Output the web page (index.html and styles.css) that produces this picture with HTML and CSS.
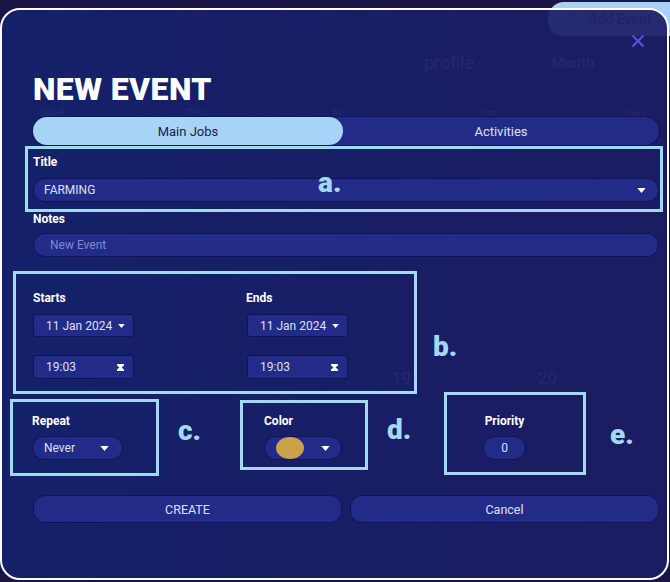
FILE: index.html
```html
<!DOCTYPE html>
<html lang="en">
<head>
    <meta charset="UTF-8">
    <meta name="viewport" content="width=device-width, initial-scale=1.0">
    <title>New Event</title>
    <link rel="stylesheet" href="styles.css">
</head>
<body>
    <div class="screen">
        <!-- calendar behind the dialog -->
        <div class="backdrop">
            <div class="bd-top"><span class="bd-add">Add Event</span></div>
            <div class="bd-nav">
                <span class="bd-profile">profile</span>
                <span class="bd-month">Month</span>
            </div>
            <div class="bd-week">
                <span>Wed</span><span>Thu</span><span>Fri</span><span>Sat</span><span>Sun</span>
            </div>
            <div class="bd-days">
                <span></span><span></span><span>19</span><span>20</span>
            </div>
        </div>

        <div class="modal">
            <button class="close" aria-label="Close">
                <svg viewBox="0 0 14 14" width="14" height="14"><path d="M1.5 1.5l11 11M12.5 1.5l-11 11"/></svg>
            </button>

            <h1>NEW EVENT</h1>

            <div class="tabs">
                <button class="tab active">Main Jobs</button>
                <button class="tab">Activities</button>
            </div>

            <div class="mark mark-a">
                <label class="label">Title</label>
                <div class="select wide">
                    <span>FARMING</span>
                    <svg class="caret" viewBox="0 0 10 6"><path d="M0 0h10L5 6z"/></svg>
                </div>
            </div>

            <label class="label notes-label" for="notes">Notes</label>
            <input class="text-input" id="notes" placeholder="New Event">

            <div class="mark mark-b">
                <div class="range-col">
                    <label class="label">Starts</label>
                    <div class="picker">
                        <span>11 Jan 2024</span>
                        <svg class="caret small" viewBox="0 0 10 6"><path d="M0 0h10L5 6z"/></svg>
                    </div>
                    <div class="picker time">
                        <span>19:03</span>
                        <svg class="spin" viewBox="0 0 8 8"><path d="M0 0H8V1.6L5.2 4L8 6.4V8H0V6.4L2.8 4L0 1.6Z"/></svg>
                    </div>
                </div>
                <div class="range-col ends">
                    <label class="label">Ends</label>
                    <div class="picker">
                        <span>11 Jan 2024</span>
                        <svg class="caret small" viewBox="0 0 10 6"><path d="M0 0h10L5 6z"/></svg>
                    </div>
                    <div class="picker time">
                        <span>19:03</span>
                        <svg class="spin" viewBox="0 0 8 8"><path d="M0 0H8V1.6L5.2 4L8 6.4V8H0V6.4L2.8 4L0 1.6Z"/></svg>
                    </div>
                </div>
            </div>

            <div class="extras">
                <div class="mark mark-c">
                    <label class="label">Repeat</label>
                    <div class="select repeat">
                        <span>Never</span>
                        <svg class="caret" viewBox="0 0 10 6"><path d="M0 0h10L5 6z"/></svg>
                    </div>
                </div>
                <div class="mark mark-d">
                    <label class="label">Color</label>
                    <div class="select color">
                        <span class="swatch"></span>
                        <svg class="caret" viewBox="0 0 10 6"><path d="M0 0h10L5 6z"/></svg>
                    </div>
                </div>
                <div class="mark mark-e">
                    <div class="priority">
                        <label class="label">Priority</label>
                        <div class="select number">0</div>
                    </div>
                </div>
            </div>

            <div class="actions">
                <button class="btn">CREATE</button>
                <button class="btn">Cancel</button>
            </div>
        </div>

        <span class="tag tag-a">a.</span>
        <span class="tag tag-b">b.</span>
        <span class="tag tag-c">c.</span>
        <span class="tag tag-d">d.</span>
        <span class="tag tag-e">e.</span>
    </div>
</body>
</html>
```

FILE: styles.css
```css
:root {
    --page-bg: #1b1546;
    --field-bg: #232b88;
    --field-edge: #0d1456;
    --mark: #a3d8f0;
    --tab-active: #a7d3f7;
    --text-light: #dde0f6;
}

* {
    box-sizing: border-box;
}

body {
    margin: 0;
    font-family: Roboto, "Noto Sans", sans-serif;
    background-color: var(--page-bg);
    color: #fff;
}

.screen {
    position: relative;
    width: 670px;
    height: 582px;
    overflow: hidden;
    background-color: var(--page-bg);
}

/* backdrop calendar */
.backdrop {
    color: rgba(255, 255, 255, 0.6);
}

.bd-top {
    display: flex;
    justify-content: flex-end;
    padding-top: 2px;
}

.bd-add {
    width: 142px;
    height: 34px;
    margin-right: -20px;
    padding-left: 40px;
    line-height: 34px;
    border-radius: 16px;
    background-color: var(--tab-active);
    color: #5a6aa8;
    font-size: 14px;
    font-weight: 700;
}

.bd-nav {
    display: flex;
    margin-top: 16px;
    padding-left: 424px;
    font-size: 18px;
    line-height: 22px;
}

.bd-month {
    margin-left: 77px;
    font-size: 15px;
    font-weight: 500;
}

.bd-week {
    display: grid;
    grid-template-columns: repeat(5, 146px);
    margin-top: 34px;
    padding-left: 40px;
    font-size: 12px;
    line-height: 12px;
}

.bd-days {
    display: grid;
    grid-template-columns: repeat(4, 146px);
    margin-top: 248px;
    padding-left: 100px;
    font-size: 17px;
    line-height: 20px;
}

/* dialog */
.modal {
    position: absolute;
    left: 0;
    top: 8px;
    width: 669px;
    height: 572px;
    padding: 65px 8px 0 31px;
    border: 2px solid #fff;
    border-radius: 20px;
    background: linear-gradient(90deg, rgba(19, 34, 108, 0.92), rgba(28, 28, 99, 0.92));
}

.close {
    position: absolute;
    top: 24px;
    right: 22px;
    width: 14px;
    height: 14px;
    padding: 0;
    border: none;
    background: none;
    cursor: pointer;
}

.close svg {
    display: block;
    stroke: #4d52e2;
    stroke-width: 2.4;
}

h1 {
    margin: 0;
    font-size: 32px;
    line-height: 28px;
    font-weight: 900;
    letter-spacing: 0.4px;
}

.tabs {
    display: flex;
    height: 28px;
    margin-top: 14px;
    border-radius: 14px;
    background-color: var(--field-bg);
    box-shadow: 0 0 0 1px var(--field-edge);
}

.tab {
    flex: 1;
    padding: 0;
    border: none;
    border-radius: 14px;
    background: none;
    color: var(--text-light);
    font-family: inherit;
    font-size: 13px;
    cursor: pointer;
}

.tab.active {
    flex: 0 0 310px;
    background-color: var(--tab-active);
    color: #1a2050;
}

.label {
    display: block;
    font-size: 12px;
    line-height: 16px;
    font-weight: 700;
    color: #fff;
}

/* annotation frames */
.mark {
    border: 3px solid var(--mark);
}

.mark-a {
    margin: 1px -4px 0 -8px;
    padding: 5px 1px 7px 5px;
}

.select {
    display: flex;
    align-items: center;
    justify-content: space-between;
    height: 24px;
    margin-top: 8px;
    padding: 0 12px 0 10px;
    border: 1px solid var(--field-edge);
    border-radius: 12px;
    background-color: var(--field-bg);
    color: var(--text-light);
    font-size: 12px;
}

.caret {
    width: 9px;
    height: 5px;
    fill: #fff;
}

.caret.small {
    width: 7px;
    height: 4px;
}

.notes-label {
    line-height: 14px;
}

.text-input {
    display: block;
    width: 100%;
    height: 24px;
    margin-top: 7px;
    padding: 0 16px;
    border: 1px solid var(--field-edge);
    border-radius: 12px;
    background-color: var(--field-bg);
    color: var(--text-light);
    font-family: inherit;
    font-size: 12px;
    outline: none;
}

.text-input::placeholder {
    color: #8189cf;
}

.mark-b {
    display: flex;
    width: 404px;
    margin: 14px 0 0 -20px;
    padding: 16px 0 12px 17px;
}

.range-col {
    width: 213px;
}

.range-col.ends {
    width: auto;
}

.picker {
    display: flex;
    align-items: center;
    justify-content: space-between;
    width: 101px;
    height: 23px;
    margin-top: 8px;
    padding: 0 8px 0 12px;
    border: 1px solid var(--field-edge);
    border-radius: 3px;
    background-color: var(--field-bg);
    color: var(--text-light);
    font-size: 12px;
}

.ends .picker {
    margin-left: 1px;
}

.picker.time {
    height: 24px;
    margin-top: 18px;
    padding-right: 9px;
}

.spin {
    width: 7px;
    height: 7px;
    fill: #fff;
}

.extras {
    display: flex;
    align-items: flex-start;
    margin: -2px 0 0 -23px;
}

.extras .select {
    margin-top: 7px;
}

.mark-c {
    width: 149px;
    margin-top: 7px;
    padding: 11px 0 13px 19px;
}

.repeat {
    width: 91px;
    padding: 0 13px 0 11px;
}

.mark-d {
    width: 128px;
    margin: 8px 0 0 81px;
    padding: 10px 0 7px 21px;
}

.color {
    width: 78px;
    padding: 0 11px 0 11px;
}

.swatch {
    width: 28px;
    height: 22px;
    border-radius: 50%;
    background-color: #c9a24a;
}

.mark-e {
    width: 142px;
    margin-left: 76px;
    padding: 18px 0 12px 35px;
}

.priority {
    display: flex;
    flex-direction: column;
    align-items: center;
    width: 45px;
}

.number {
    justify-content: center;
    width: 43px;
    padding: 0;
}

.actions {
    display: flex;
    gap: 8px;
    margin-top: 19px;
}

.btn {
    flex: 1;
    height: 28px;
    border: 1px solid var(--field-edge);
    border-radius: 12px;
    background-color: var(--field-bg);
    color: var(--text-light);
    font-family: inherit;
    font-size: 12.5px;
    cursor: pointer;
}

/* annotation letters */
.tag {
    position: absolute;
    font-size: 28px;
    line-height: 28px;
    font-weight: 900;
    color: var(--mark);
}

.tag-a { left: 318px; top: 169px; }
.tag-b { left: 433px; top: 333px; }
.tag-c { left: 178px; top: 417px; }
.tag-d { left: 387px; top: 416px; }
.tag-e { left: 610px; top: 421px; }
```
